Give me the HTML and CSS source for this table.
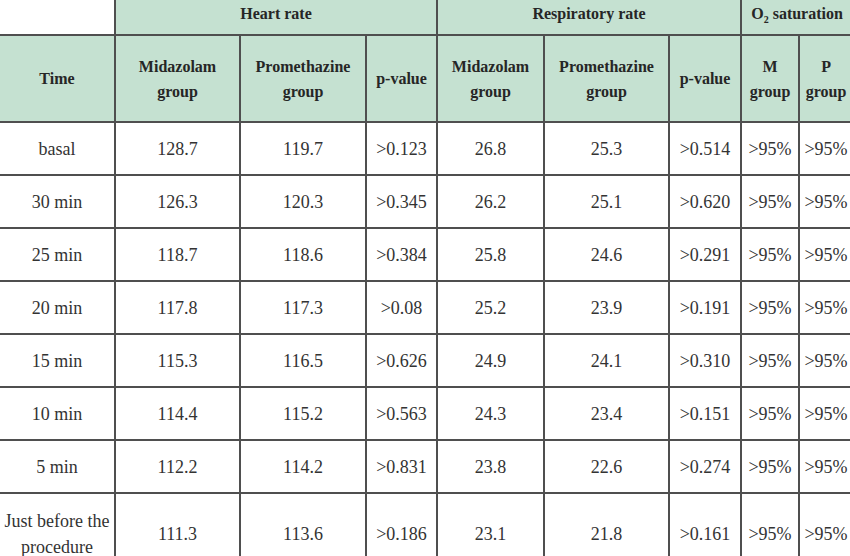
FILE: index.html
```html
<!DOCTYPE html>
<html>
<head>
<meta charset="utf-8">
<link rel="stylesheet" href="styles.css">
</head>
<body>
<table class="data">
  <colgroup>
    <col class="c-time">
    <col class="c-mid">
    <col class="c-pro">
    <col class="c-pv">
    <col class="c-mid2">
    <col class="c-pro2">
    <col class="c-pv2">
    <col class="c-m">
    <col class="c-p">
  </colgroup>
  <thead>
    <tr class="h1">
      <th class="blank"></th>
      <th colspan="3">Heart rate</th>
      <th colspan="3">Respiratory rate</th>
      <th colspan="2">O<sub>2</sub> saturation</th>
    </tr>
    <tr class="h2">
      <th class="first">Time</th>
      <th>Midazolam<br>group</th>
      <th>Promethazine<br>group</th>
      <th>p-value</th>
      <th>Midazolam<br>group</th>
      <th>Promethazine<br>group</th>
      <th>p-value</th>
      <th>M<br>group</th>
      <th>P<br>group</th>
    </tr>
  </thead>
  <tbody>
    <tr class="r"><td class="first">basal</td><td>128.7</td><td>119.7</td><td>&gt;0.123</td><td>26.8</td><td>25.3</td><td>&gt;0.514</td><td>&gt;95%</td><td>&gt;95%</td></tr>
    <tr class="r"><td class="first">30 min</td><td>126.3</td><td>120.3</td><td>&gt;0.345</td><td>26.2</td><td>25.1</td><td>&gt;0.620</td><td>&gt;95%</td><td>&gt;95%</td></tr>
    <tr class="r"><td class="first">25 min</td><td>118.7</td><td>118.6</td><td>&gt;0.384</td><td>25.8</td><td>24.6</td><td>&gt;0.291</td><td>&gt;95%</td><td>&gt;95%</td></tr>
    <tr class="r"><td class="first">20 min</td><td>117.8</td><td>117.3</td><td>&gt;0.08</td><td>25.2</td><td>23.9</td><td>&gt;0.191</td><td>&gt;95%</td><td>&gt;95%</td></tr>
    <tr class="r"><td class="first">15 min</td><td>115.3</td><td>116.5</td><td>&gt;0.626</td><td>24.9</td><td>24.1</td><td>&gt;0.310</td><td>&gt;95%</td><td>&gt;95%</td></tr>
    <tr class="r"><td class="first">10 min</td><td>114.4</td><td>115.2</td><td>&gt;0.563</td><td>24.3</td><td>23.4</td><td>&gt;0.151</td><td>&gt;95%</td><td>&gt;95%</td></tr>
    <tr class="r"><td class="first">5 min</td><td>112.2</td><td>114.2</td><td>&gt;0.831</td><td>23.8</td><td>22.6</td><td>&gt;0.274</td><td>&gt;95%</td><td>&gt;95%</td></tr>
    <tr class="r last"><td class="first">Just before the<br>procedure</td><td>111.3</td><td>113.6</td><td>&gt;0.186</td><td>23.1</td><td>21.8</td><td>&gt;0.161</td><td>&gt;95%</td><td>&gt;95%</td></tr>
  </tbody>
</table>
</body>
</html>
```
FILE: styles.css
```css
html, body {
  margin: 0;
  padding: 0;
  background: #ffffff;
  overflow: hidden;
}

body {
  width: 850px;
  height: 556px;
}

.data {
  border-collapse: collapse;
  table-layout: fixed;
  width: 853px;
  font-family: "Liberation Serif", "Times New Roman", serif;
  color: #2b2b2b;
}

.c-time { width: 115px; }
.c-mid { width: 125px; }
.c-pro { width: 126px; }
.c-pv { width: 71px; }
.c-mid2 { width: 107px; }
.c-pro2 { width: 125px; }
.c-pv2 { width: 72px; }
.c-m { width: 58px; }
.c-p { width: 54px; }

.data th,
.data td {
  border: 2px solid #4f4f4f;
  text-align: center;
  vertical-align: middle;
  padding: 0;
  white-space: nowrap;
  overflow: visible;
}

.data th {
  background: #c5e1d1;
  font-weight: bold;
  font-size: 16px;
  line-height: 25px;
  color: #262626;
}

.data td {
  font-size: 18px;
  line-height: 26px;
  color: #333333;
}

.data .first {
  border-left: none;
}

.h1 th {
  border-top: none;
  height: 26px;
  padding-bottom: 8px;
}

.h1 th.blank {
  background: #ffffff;
  border-left: none;
}

.h1 sub {
  font-size: 10px;
  line-height: 0;
}

.h2 th {
  height: 85px;
}

.r td {
  height: 50px;
  padding-top: 1px;
}

.r.last td {
  height: 77px;
}
```
